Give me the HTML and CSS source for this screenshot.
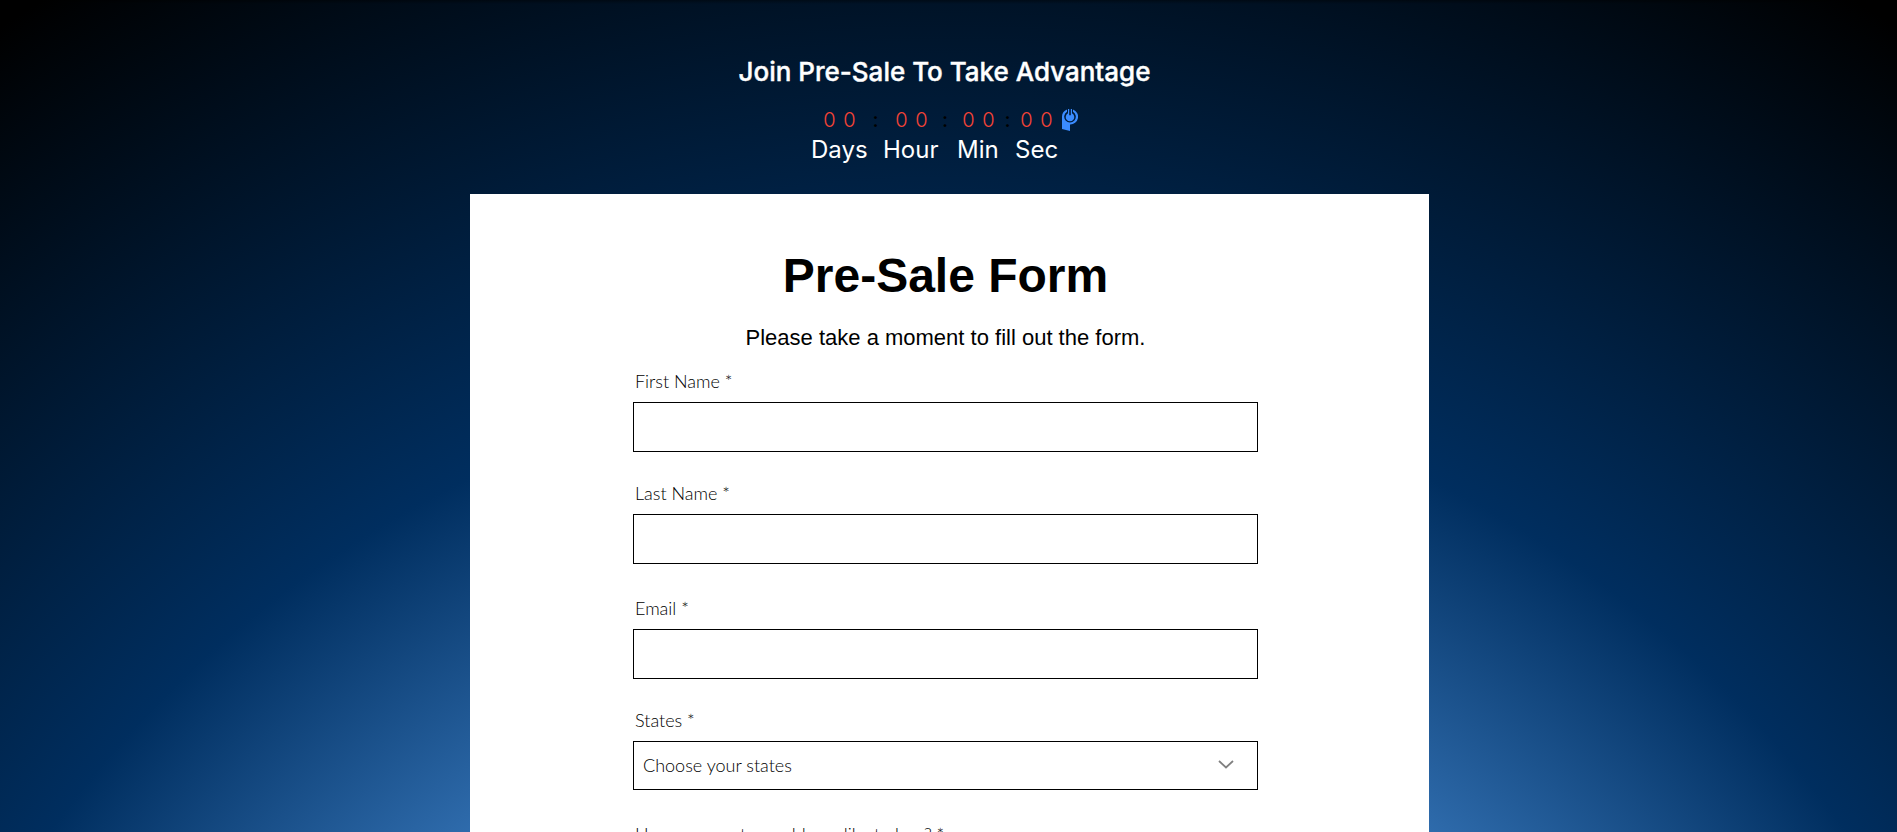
FILE: index.html
```html
<!DOCTYPE html>
<html lang="en">
<head>
<meta charset="utf-8">
<meta name="viewport" content="width=device-width, initial-scale=1">
<title>Pre-Sale Form</title>
<link rel="stylesheet" href="styles.css">
</head>
<body>
<main class="page">
  <header class="hero">
    <h2 class="hero-title">Join Pre-Sale To Take Advantage</h2>
    <div class="countdown">
      <div class="digits">
        <span class="pair"><span>0</span><span>0</span></span>
        <span class="colon">:</span>
        <span class="pair"><span>0</span><span>0</span></span>
        <span class="colon">:</span>
        <span class="pair"><span>0</span><span>0</span></span>
        <span class="colon">:</span>
        <span class="pair"><span>0</span><span>0</span></span>
        <svg class="badge" viewBox="0 0 16 22" aria-hidden="true">
          <path fill="#3b8cff" d="M5 .4A7.800 7.800 0 0 0 0 7.800V20L8 22V15.500A7.800 7.800 0 0 0 11 .4V2.800A5.800 5.800 0 1 1 5 2.800Z"/>
          <path fill="#3b8cff" d="M6 0H7.200V6.200H8.800V0H10V4.200a4.300 4.300 0 1 1-4 0Z"/>
        </svg>
      </div>
      <div class="units"><span>Days</span><span>Hour</span><span>Min</span><span>Sec</span></div>
    </div>
  </header>
  <section class="card">
    <form class="form">
      <h1 class="form-title">Pre-Sale Form</h1>
      <p class="form-intro">Please take a moment to fill out the form.</p>
      <div class="group">
        <div class="field"><label for="first">First Name *</label><input class="control" id="first" type="text" required></div>
        <div class="field"><label for="last">Last Name *</label><input class="control" id="last" type="text" required></div>
      </div>
      <div class="group">
        <div class="field"><label for="email">Email *</label><input class="control" id="email" type="email" required></div>
        <div class="field"><label for="states">States *</label>
          <div class="select-wrap">
            <select class="control select" id="states" required><option>Choose your states</option></select>
            <svg class="chevron" viewBox="0 0 16 9" aria-hidden="true"><path d="M1 1l7 6.500L15 1" fill="none" stroke="#808080" stroke-width="1.800"/></svg>
          </div>
        </div>
      </div>
      <div class="group">
        <div class="field"><label for="count">How many sets would you like to buy? *</label><input class="control" id="count" type="text" required></div>
      </div>
    </form>
  </section>
</main>
</body>
</html>
```
FILE: styles.css
```css
* { box-sizing: border-box; }
html { background: #000; }
body {
  margin: 0;
  height: 100vh;
  overflow: hidden;
  background:
    linear-gradient(rgba(0, 0, 0, 0.4), transparent 4px),
    radial-gradient(circle farthest-corner at 50% 177%, #2f6cad 45.5%, #002e5f 63%, #000 98.7%);
}
.page { display: flex; flex-direction: column; align-items: center; padding-left: 2px; }
.hero {
  width: 100%;
  padding: 56px 10px 30px 0;
  display: flex;
  flex-direction: column;
  align-items: center;
  font-family: Inter, "Open Sans", sans-serif;
  color: #fff;
}
.hero-title { margin: 0 0 18px; font-size: 26px; line-height: 32px; font-weight: 500; -webkit-text-stroke: 0.4px #fff; }
.countdown { width: 267px; }
.digits {
  display: grid;
  grid-template-columns: 35px 37px 35px 32px 35px 23px 35px 24px;
  align-items: center;
  padding-left: 11px;
  height: 28px;
  font-size: 20px;
  font-weight: 300;
  color: #f44336;
}
.pair { display: grid; grid-template-columns: 15px 15px; gap: 5px; text-align: center; }
.colon { text-align: center; color: #000; font-weight: 500; }
.badge { width: 16px; height: 22px; justify-self: end; }
.units {
  display: grid;
  grid-template-columns: 72px 74px 58px auto;
  padding-top: 2px;
  font-size: 24px;
  line-height: 28px;
}
.card { width: 100%; max-width: 959px; padding: 53px 24px 0 16px; background: #fff; }
.form {
  max-width: 625px;
  margin: 0 auto;
  font-family: Lato, sans-serif;
  color: #000;
}
.form-title { margin: 0; font: bold 48px/58px "Liberation Sans", Arial, sans-serif; text-align: center; }
.form-intro { margin: 18px 0 16px; font: 22px/30px "Liberation Sans", Arial, sans-serif; text-align: center; }
.group { display: grid; gap: 29px; margin-bottom: 32px; }
.field { display: flex; flex-direction: column; gap: 9px; }
.field label { padding-left: 2px; font-size: 18px; line-height: 24px; font-weight: 300; }
.control {
  display: block;
  width: 100%;
  height: 50px;
  padding: 0 9px;
  border: 1px solid #000;
  border-radius: 0;
  background: #fff;
  color: #000;
  font: 300 18px Lato, sans-serif;
  appearance: none;
}
.select { height: 49px; padding-bottom: 2px; }
.select-wrap { position: relative; }
.chevron { position: absolute; right: 24px; top: 19px; width: 16px; height: 9px; pointer-events: none; }
```
